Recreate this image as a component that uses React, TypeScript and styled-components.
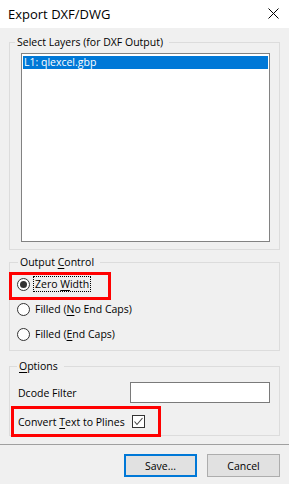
import React from "react";
import styled, { createGlobalStyle } from "styled-components";

const GlobalStyle = createGlobalStyle`
  html, body { margin: 0; padding: 0; }
  body {
    background: #f0f0f0;
    font-family: "Open Sans", "Noto Sans", sans-serif;
    font-size: 10.5px;
    color: #000;
  }
  * { box-sizing: border-box; }
`;

const Dialog = styled.div`
  width: 289px;
  height: 484px;
  display: flex;
  flex-direction: column;
  background: #f0f0f0;
  overflow: hidden;
`;

const TitleBar = styled.div`
  height: 28px;
  flex: none;
  background: #fff;
  display: flex;
  align-items: center;
  justify-content: space-between;
  padding: 0 10px 1px 8px;
`;

const Title = styled.span`
  font-size: 13px;
  line-height: 16px;
`;

const Group = styled.fieldset<{ $mt: number; $pt: number; $pb: number; $pl: number }>`
  margin: ${(p) => p.$mt}px 9px 0 9px;
  padding: ${(p) => p.$pt}px 9px ${(p) => p.$pb}px ${(p) => p.$pl}px;
  border: 1px solid #dcdcdc;
  min-inline-size: 0;
  flex: none;
  display: flex;
  flex-direction: column;
`;

const Legend = styled.legend<{ $ml: number }>`
  margin-left: ${(p) => p.$ml}px;
  padding: 0 6px 0 2px;
  line-height: 14px;
  height: 14px;
`;

const ListBox = styled.div`
  height: 189px;
  background: #fff;
  border: 1px solid #828282;
  padding: 2px 1px 1px 1px;
`;

const ListItem = styled.div<{ $selected?: boolean }>`
  height: 13px;
  line-height: 13px;
  padding-left: 1px;
  background: ${(p) => (p.$selected ? "#0078d7" : "transparent")};
  color: ${(p) => (p.$selected ? "#fff" : "#000")};
  white-space: nowrap;
`;

const OptionList = styled.div<{ $gap: number }>`
  display: flex;
  flex-direction: column;
  gap: ${(p) => p.$gap}px;
`;

const Row = styled.div<{ $h: number }>`
  position: relative;
  height: ${(p) => p.$h}px;
  display: flex;
  align-items: center;
`;

const RadioCircle = styled.span<{ $checked?: boolean }>`
  width: 13px;
  height: 13px;
  border: 1px solid #333;
  border-radius: 50%;
  background: #fff;
  flex: none;
  display: flex;
  align-items: center;
  justify-content: center;
  margin-right: 3px;
  &::after {
    content: "";
    width: 7px;
    height: 7px;
    border-radius: 50%;
    background: ${(p) => (p.$checked ? "#333" : "transparent")};
  }
`;

const Label = styled.span<{ $focused?: boolean }>`
  line-height: 14px;
  white-space: nowrap;
  padding: 0 1px;
  flex: none;
  border: 1px dotted ${(p) => (p.$focused ? "#000" : "transparent")};
`;

const PlainLabel = styled.span`
  line-height: 14px;
  white-space: nowrap;
  flex: none;
`;

const Key = styled.span`
  text-decoration: underline;
  text-underline-offset: 2px;
`;

const Highlight = styled.span<{ $l: number; $t: number; $w: number; $h: number }>`
  position: absolute;
  left: ${(p) => p.$l}px;
  top: ${(p) => p.$t}px;
  width: ${(p) => p.$w}px;
  height: ${(p) => p.$h}px;
  border: 3px solid #ff0000;
  pointer-events: none;
`;

const FieldRow = styled(Row)`
  justify-content: space-between;
`;

const TextBox = styled.div`
  width: 140px;
  height: 21px;
  background: #fff;
  border: 1px solid #7a7a7a;
`;

const CheckBox = styled.span`
  width: 13px;
  height: 13px;
  border: 1px solid #333;
  background: #fff;
  margin-left: 7px;
  display: flex;
  flex: none;
`;

const Footer = styled.div`
  margin-top: 8px;
  border-top: 1px solid #a0a0a0;
  padding: 9px 9px 0 0;
  display: flex;
  justify-content: flex-end;
  gap: 10px;
`;

const Button = styled.button<{ $default?: boolean }>`
  width: 73px;
  height: 23px;
  font: inherit;
  color: #000;
  background: #e1e1e1;
  border: ${(p) => (p.$default ? "2px solid #0078d7" : "1px solid #adadad")};
  padding: 0;
  line-height: 14px;
`;

const CloseIcon = () => (
  <svg width="11" height="11" viewBox="0 0 11 11">
    <path d="M0.5 0.5 L10.5 10.5 M10.5 0.5 L0.5 10.5" stroke="#000" strokeWidth="1" fill="none" />
  </svg>
);

const CheckMark = () => (
  <svg width="11" height="11" viewBox="0 0 11 11">
    <path d="M1.5 5.5 L4 8.5 L9.5 2" stroke="#444" strokeWidth="1.1" fill="none" />
  </svg>
);

export default function App() {
  return (
    <>
      <GlobalStyle />
      <Dialog>
        <TitleBar>
          <Title>Export DXF/DWG</Title>
          <CloseIcon />
        </TitleBar>

        <Group $mt={7} $pt={4} $pb={7} $pl={11}>
          <Legend $ml={-6}>Select Layers (for DXF Output)</Legend>
          <ListBox>
            <ListItem $selected>L1: qlexcel.gbp</ListItem>
          </ListBox>
        </Group>

        <Group $mt={5} $pt={5} $pb={6} $pl={7}>
          <Legend $ml={1}>
            Output <Key>C</Key>ontrol
          </Legend>
          <OptionList $gap={5}>
            <Row $h={20}>
              <Highlight $l={-8} $t={-2} $w={102} $h={28} />
              <RadioCircle $checked />
              <Label $focused>
                Zero <Key>W</Key>idth
              </Label>
            </Row>
            <Row $h={20}>
              <RadioCircle />
              <Label>
                Filled (<Key>N</Key>o End Caps)
              </Label>
            </Row>
            <Row $h={20}>
              <RadioCircle />
              <Label>
                Filled (<Key>E</Key>nd Caps)
              </Label>
            </Row>
          </OptionList>
        </Group>

        <Group $mt={8} $pt={9} $pb={3} $pl={8}>
          <Legend $ml={-1}>
            <Key>O</Key>ptions
          </Legend>
          <OptionList $gap={8}>
            <FieldRow $h={21}>
              <PlainLabel>Dcode Filter</PlainLabel>
              <TextBox />
            </FieldRow>
            <Row $h={21}>
              <Highlight $l={-7} $t={-5} $w={150} $h={31} />
              <PlainLabel>
                Convert <Key>T</Key>ext to Plines
              </PlainLabel>
              <CheckBox>
                <CheckMark />
              </CheckBox>
            </Row>
          </OptionList>
        </Group>

        <Footer>
          <Button $default>Save...</Button>
          <Button>Cancel</Button>
        </Footer>
      </Dialog>
    </>
  );
}
